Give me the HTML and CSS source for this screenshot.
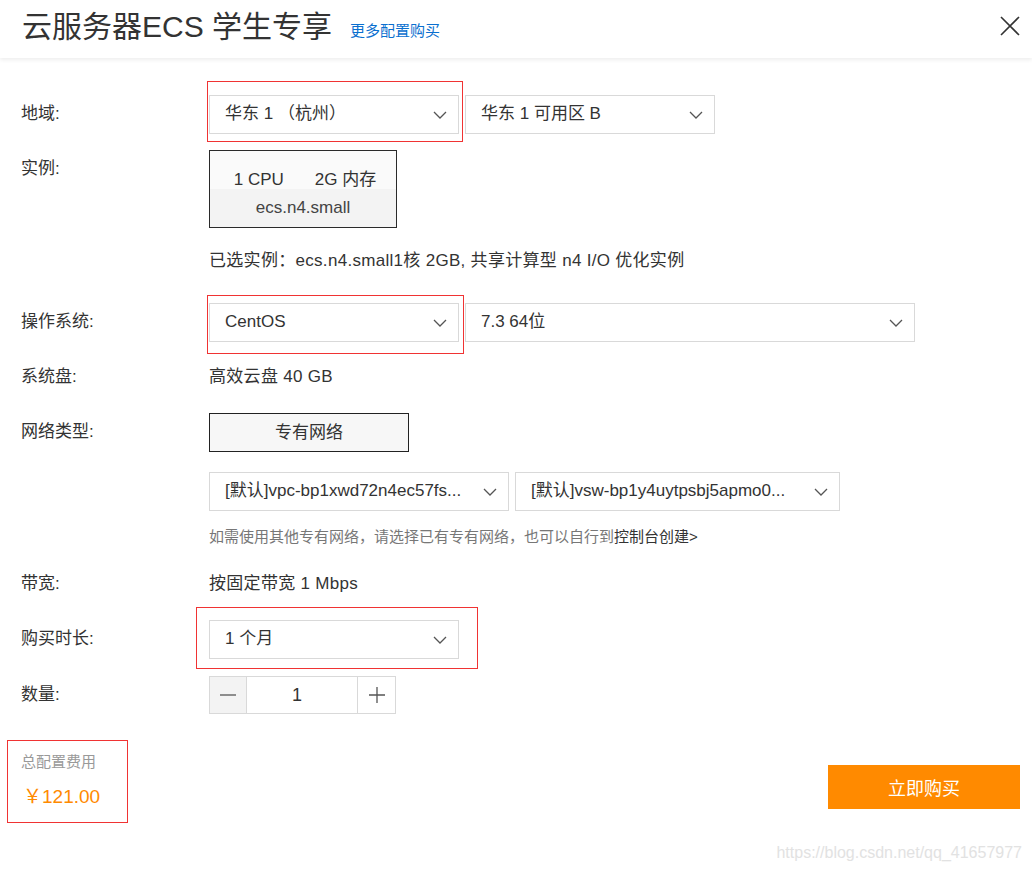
FILE: index.html
```html
<!DOCTYPE html>
<html lang="zh-CN">
<head>
<meta charset="utf-8">
<title>云服务器ECS 学生专享</title>
<link rel="stylesheet" href="styles.css">
</head>
<body>
<header class="head">
  <h1 class="title">云服务器ECS 学生专享</h1>
  <a class="more" href="#">更多配置购买</a>
  <button class="close" aria-label="关闭">
    <svg width="22" height="22" viewBox="0 0 22 22"><path d="M2 2L20 20M20 2L2 20" fill="none" stroke="#333" stroke-width="1.6"/></svg>
  </button>
</header>

<main class="form">
  <div class="row">
    <div class="label">地域:</div>
    <div class="field">
      <div class="select w250 mark mark-a"><span class="val">华东 1 （杭州）</span><svg class="chev" width="14" height="8" viewBox="0 0 14 8"><path d="M1 1L7 7L13 1" fill="none" stroke="#555" stroke-width="1.3"/></svg></div>
      <div class="select w250"><span class="val">华东 1 可用区 B</span><svg class="chev" width="14" height="8" viewBox="0 0 14 8"><path d="M1 1L7 7L13 1" fill="none" stroke="#555" stroke-width="1.3"/></svg></div>
    </div>
  </div>

  <div class="row m16">
    <div class="label">实例:</div>
    <div class="field">
      <div class="inst">
        <div class="inst-top"><span>1 CPU</span><span>2G 内存</span></div>
        <div class="inst-bot">ecs.n4.small</div>
      </div>
    </div>
  </div>

  <div class="row m14">
    <div class="label"></div>
    <div class="field text">已选实例：ecs.n4.small1核 2GB, 共享计算型 n4 I/O 优化实例</div>
  </div>

  <div class="row m23">
    <div class="label">操作系统:</div>
    <div class="field">
      <div class="select w250 mark mark-b"><span class="val">CentOS</span><svg class="chev" width="14" height="8" viewBox="0 0 14 8"><path d="M1 1L7 7L13 1" fill="none" stroke="#555" stroke-width="1.3"/></svg></div>
      <div class="select w450"><span class="val">7.3 64位</span><svg class="chev" width="14" height="8" viewBox="0 0 14 8"><path d="M1 1L7 7L13 1" fill="none" stroke="#555" stroke-width="1.3"/></svg></div>
    </div>
  </div>

  <div class="row m16">
    <div class="label">系统盘:</div>
    <div class="field text">高效云盘 40 GB</div>
  </div>

  <div class="row m17">
    <div class="label">网络类型:</div>
    <div class="field">
      <div class="nettype">专有网络</div>
    </div>
  </div>

  <div class="row m20">
    <div class="label"></div>
    <div class="field">
      <div class="select w300"><span class="val">[默认]vpc-bp1xwd72n4ec57fs...</span><svg class="chev" width="14" height="8" viewBox="0 0 14 8"><path d="M1 1L7 7L13 1" fill="none" stroke="#555" stroke-width="1.3"/></svg></div>
      <div class="select w325"><span class="val">[默认]vsw-bp1y4uytpsbj5apmo0...</span><svg class="chev" width="14" height="8" viewBox="0 0 14 8"><path d="M1 1L7 7L13 1" fill="none" stroke="#555" stroke-width="1.3"/></svg></div>
    </div>
  </div>

  <div class="row m16">
    <div class="label"></div>
    <div class="field hint">如需使用其他专有网络，请选择已有专有网络，也可以自行到<a class="hint-link" href="#">控制台创建&gt;</a></div>
  </div>

  <div class="row m18">
    <div class="label">带宽:</div>
    <div class="field text">按固定带宽 1 Mbps</div>
  </div>

  <div class="row m17">
    <div class="label">购买时长:</div>
    <div class="field">
      <div class="select w250 mark mark-c"><span class="val">1 个月</span><svg class="chev" width="14" height="8" viewBox="0 0 14 8"><path d="M1 1L7 7L13 1" fill="none" stroke="#555" stroke-width="1.3"/></svg></div>
    </div>
  </div>

  <div class="row m17">
    <div class="label">数量:</div>
    <div class="field">
      <div class="stepper">
        <span class="step minus"><svg width="16" height="2" viewBox="0 0 16 2"><path d="M0 1H16" stroke="#555" stroke-width="1.3"/></svg></span>
        <span class="num">1</span>
        <span class="step plus"><svg width="16" height="16" viewBox="0 0 16 16"><path d="M0 8H16M8 0V16" stroke="#555" stroke-width="1.3"/></svg></span>
      </div>
    </div>
  </div>
</main>

<footer class="foot">
  <div class="price mark mark-d">
    <div class="price-label">总配置费用</div>
    <div class="price-val">￥121.00</div>
  </div>
  <button class="buy">立即购买</button>
</footer>

<div class="watermark">https://blog.csdn.net/qq_41657977</div>
</body>
</html>
```

FILE: styles.css
```css
html, body {
  margin: 0;
  padding: 0;
}
body {
  width: 1032px;
  height: 872px;
  overflow: hidden;
  position: relative;
  background: #fff;
  color: #333;
  font-family: "Liberation Sans", "Noto Sans CJK SC", sans-serif;
  font-size: 17px;
}

/* header */
.head {
  height: 58px;
  display: flex;
  align-items: center;
  background: #fff;
  box-shadow: 0 2px 4px rgba(0, 0, 0, 0.07);
  position: relative;
}
.title {
  margin: -4px 0 0 22px;
  font-size: 30px;
  font-weight: normal;
  line-height: 40px;
  color: #333;
}
.more {
  margin: 4px 0 0 18px;
  font-size: 15px;
  line-height: 20px;
  color: #0a6fcf;
  text-decoration: none;
}
.close {
  margin: -6px 11px 0 auto;
  padding: 0;
  border: 0;
  background: none;
  width: 22px;
  height: 22px;
  display: flex;
}

/* form */
.form {
  padding: 37px 0 0 21px;
}
.row {
  display: flex;
  align-items: flex-start;
}
.m14 { margin-top: 14px; }
.m16 { margin-top: 16px; }
.m17 { margin-top: 17px; }
.m18 { margin-top: 18px; }
.m20 { margin-top: 20px; }
.m23 { margin-top: 23px; }

.label {
  width: 188px;
  flex: none;
  line-height: 38px;
  font-size: 17px;
  color: #333;
}
.field {
  display: flex;
  gap: 6px;
}
.text {
  line-height: 38px;
  color: #333;
  letter-spacing: 0.3px;
}

/* select */
.select {
  box-sizing: border-box;
  height: 39px;
  border: 1px solid #d9d9d9;
  background: #fff;
  display: flex;
  align-items: center;
  justify-content: space-between;
  padding: 0 11px 0 15px;
  gap: 10px;
}
.select .val {
  white-space: nowrap;
  min-width: 0;
  line-height: 20px;
  margin-top: -1px;
}
.select .chev { flex: none; }
.w250 { width: 250px; }
.w300 { width: 300px; }
.w325 { width: 325px; }
.w450 { width: 450px; }

/* red annotation marks */
.mark { position: relative; }
.mark::after {
  content: "";
  position: absolute;
  border: 1px solid #f03333;
  pointer-events: none;
}
.mark-a::after { left: -3px; right: -5px; top: -15px; bottom: -9px; }
.mark-b::after { left: -3px; right: -6px; top: -9px; bottom: -13px; }
.mark-c::after { left: -14px; right: -20px; top: -14px; bottom: -11px; }
.mark-d::after { left: -14px; right: -15px; top: -12px; bottom: -12px; }

/* instance card */
.inst {
  box-sizing: border-box;
  width: 188px;
  height: 78px;
  border: 1px solid #2a2a2a;
  display: flex;
  flex-direction: column;
}
.inst-top {
  box-sizing: border-box;
  height: 38px;
  background: #fafafa;
  display: flex;
  align-items: flex-end;
  justify-content: center;
  gap: 31px;
  line-height: 20px;
  padding-left: 4px;
  padding-bottom: 1px;
}
.inst-top span {
  margin-bottom: -2px;
}
.inst-bot {
  flex: 1;
  background: #f3f3f3;
  text-align: center;
  line-height: 38px;
  font-size: 17px;
  color: #444;
}

/* network type */
.nettype {
  box-sizing: border-box;
  width: 200px;
  height: 39px;
  border: 1px solid #222;
  background: #f7f7f7;
  text-align: center;
  line-height: 37px;
}

/* hint */
.hint {
  display: block;
  font-size: 15px;
  line-height: 20px;
  color: #777;
}
.hint-link {
  color: #333;
  text-decoration: none;
}

/* stepper */
.stepper {
  display: flex;
  height: 38px;
  box-sizing: border-box;
  border: 1px solid #d9d9d9;
}
.step {
  display: flex;
  align-items: center;
  justify-content: center;
}
.minus {
  width: 36px;
  background: #f3f3f3;
  border-right: 1px solid #d9d9d9;
}
.plus {
  width: 37px;
  border-left: 1px solid #d9d9d9;
}
.num {
  box-sizing: border-box;
  width: 110px;
  padding-right: 10px;
  text-align: center;
  line-height: 36px;
  font-size: 18px;
  color: #333;
}

/* footer */
.foot {
  display: flex;
  justify-content: space-between;
  align-items: flex-start;
  margin-top: 38px;
  padding: 0 12px 0 21px;
}
.price {
  width: 92px;
}
.price-label {
  font-size: 15px;
  line-height: 20px;
  color: #999;
}
.price-val {
  margin-top: 11px;
  padding-left: 2px;
  font-size: 19px;
  line-height: 28px;
  color: #ff8a00;
}
.buy {
  margin-top: 13px;
  width: 192px;
  height: 44px;
  border: 0;
  background: #ff8a00;
  color: #fff;
  font-family: inherit;
  font-size: 18px;
  cursor: pointer;
}

/* watermark */
.watermark {
  position: absolute;
  right: 10px;
  top: 843px;
  font-size: 16px;
  line-height: 20px;
  color: #e2e2e2;
}
```
